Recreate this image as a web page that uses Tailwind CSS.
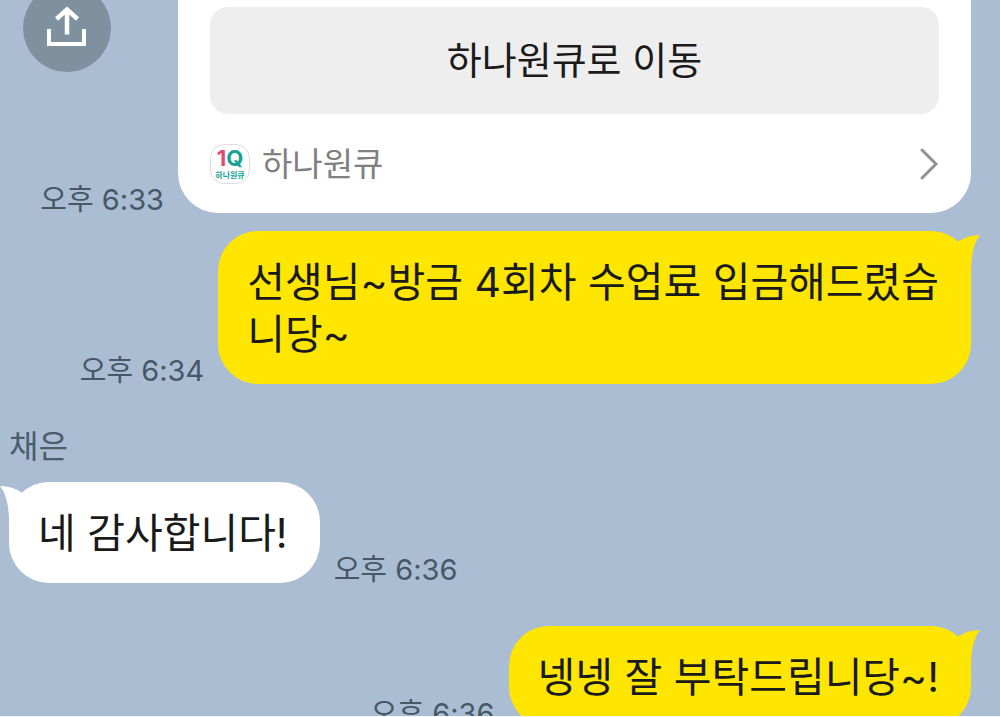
<!DOCTYPE html>
<html lang="ko">
<head>
    <meta charset="utf-8">
    <meta name="viewport" content="width=device-width, initial-scale=1">
    <title>채팅방</title>
    <!-- Tailwind CSS -->
    <script src="https://cdn.jsdelivr.net/npm/@tailwindcss/browser@4"></script>
</head>
<body class="h-screen overflow-hidden border-b border-[#f4f6f8] bg-[#abbdd3] font-['Inter','Noto_Sans_CJK_KR',sans-serif] text-[#1a1a1a]">
    <main class="flex flex-col pr-[29px]">
        <!-- Shared card -->
        <section class="flex gap-[14px]">
            <div class="flex w-[164px] shrink-0 flex-col items-end justify-between">
                <button type="button" aria-label="공유" class="-mt-4 ml-[23px] flex size-[88px] items-center justify-center self-start rounded-full bg-[#7f919e]">
                    <svg class="size-11" viewBox="0 0 44 44" fill="none" stroke="#fff" stroke-width="4">
                        <path d="M4 23v15h35V23" />
                        <path d="M22 28.500V4M11.500 13 22 3.500 32.500 13" stroke-width="4.500" />
                    </svg>
                </button>
                <time class="text-[29px] leading-[26px] whitespace-nowrap text-[#465765]">오후 6:33</time>
            </div>
            <div class="flex-1 rounded-b-[40px] bg-white px-8 pt-[7px] pb-7">
                <button type="button" class="h-[107px] w-full rounded-[18px] bg-[#eeeeee] text-[38px]">하나원큐로 이동</button>
                <a href="#" class="mt-[29px] flex h-[42px] items-center gap-3 text-[#808080]">
                    <span class="flex size-10 flex-col items-center justify-center rounded-[14px] border border-[#dddddd] text-[#17a398]">
                        <span class="text-[22px] leading-[22px] font-bold"><span class="text-[#e14a6c]">1</span>Q</span>
                        <span class="text-[8px] leading-[12px] font-bold">하나원큐</span>
                    </span>
                    <span class="text-[33px] leading-[42px]">하나원큐</span>
                    <svg class="ml-auto h-[34px] w-5" viewBox="0 0 20 34" fill="none" stroke="#929292" stroke-width="3" stroke-linecap="round">
                        <path d="M3 3l14 14L3 31" />
                    </svg>
                </a>
            </div>
        </section>

        <!-- Sent -->
        <section class="mt-[18px] flex items-end justify-end gap-[14px]">
            <time class="text-[29px] leading-[26px] whitespace-nowrap text-[#465765]">오후 6:34</time>
            <div class="relative rounded-[40px] bg-[#ffe600] pt-[25px] pr-8 pb-6 pl-[29px]">
                <p class="text-[41px] leading-[52px] whitespace-nowrap">선생님~방금 4회차 수업료 입금해드렸습<br>니당~</p>
                <svg class="absolute top-0 -right-[9px] h-10 w-[25px]" viewBox="0 0 25 40" fill="#ffe600">
                    <path d="M4 10Q13 4 25 4Q16 15 16 40H0V14z" />
                </svg>
            </div>
        </section>

        <!-- Received -->
        <section class="mt-[43px]">
            <h2 class="ml-[9px] text-[32px] leading-[40px] text-[#4b5c6b]">채은</h2>
            <div class="mt-[15px] ml-[9px] flex items-end gap-[14px]">
                <div class="relative rounded-[40px] bg-white pt-[25px] pr-8 pb-6 pl-[29px]">
                    <p class="text-[41px] leading-[52px] whitespace-nowrap">네 감사합니다!</p>
                    <svg class="absolute top-0 -left-[9px] h-10 w-[25px]" viewBox="0 0 25 40" fill="#fff">
                        <path d="M21 10Q12 4 0 4Q9 15 9 40H25V14z" />
                    </svg>
                </div>
                <time class="text-[29px] leading-[26px] whitespace-nowrap text-[#465765]">오후 6:36</time>
            </div>
        </section>

        <!-- Sent -->
        <section class="mt-[43px] flex items-end justify-end gap-[14px]">
            <time class="text-[29px] leading-[26px] whitespace-nowrap text-[#465765]">오후 6:36</time>
            <div class="relative rounded-[40px] bg-[#ffe600] pt-[25px] pr-8 pb-6 pl-[29px]">
                <p class="text-[41px] leading-[52px] whitespace-nowrap">넹넹 잘 부탁드립니당~!</p>
                <svg class="absolute top-0 -right-[9px] h-10 w-[25px]" viewBox="0 0 25 40" fill="#ffe600">
                    <path d="M4 10Q13 4 25 4Q16 15 16 40H0V14z" />
                </svg>
            </div>
        </section>
    </main>
</body>
</html>
